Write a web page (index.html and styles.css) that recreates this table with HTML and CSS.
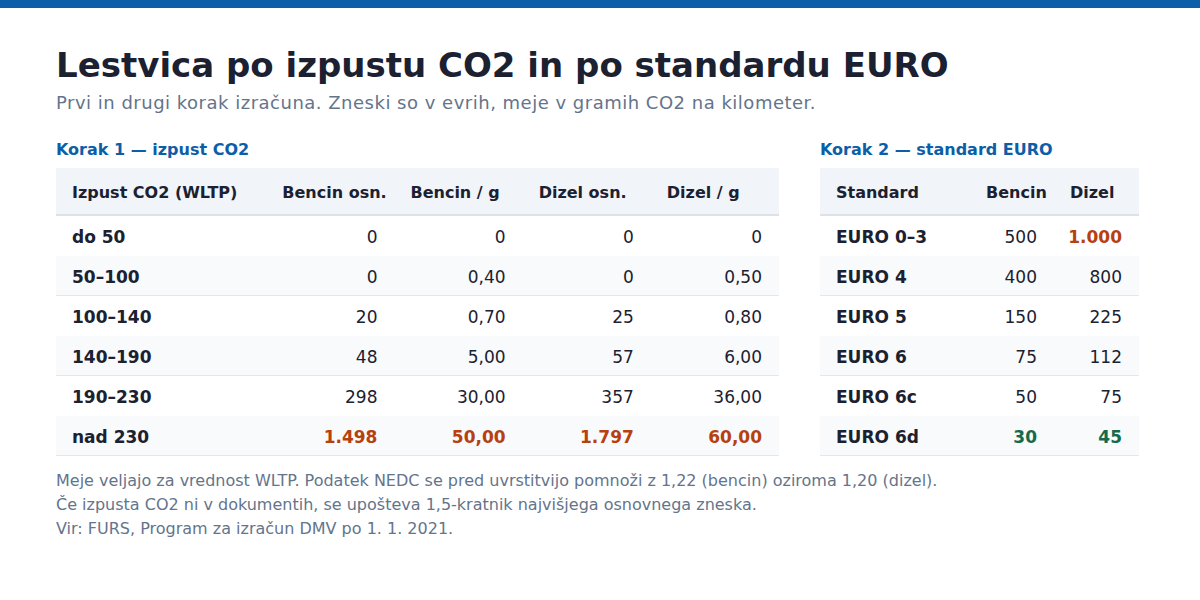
FILE: index.html
```html
<!DOCTYPE html>
<html lang="sl">
<head>
<meta charset="utf-8">
<title>Lestvica po izpustu CO2 in po standardu EURO</title>
<link rel="stylesheet" href="styles.css">
</head>
<body>
<div class="topbar"></div>
<main class="page">
  <h1 class="title">Lestvica po izpustu CO2 in po standardu EURO</h1>
  <p class="subtitle">Prvi in drugi korak izračuna. Zneski so v evrih, meje v gramih CO2 na kilometer.</p>
  <div class="tables">
    <section class="block block-co2">
      <h2 class="block-title">Korak 1 — izpust CO2</h2>
      <table class="grid grid-co2">
        <colgroup><col class="c-first"><col class="c-num"><col class="c-num"><col class="c-num"><col class="c-num"></colgroup>
        <thead>
          <tr><th>Izpust CO2 (WLTP)</th><th>Bencin osn.</th><th>Bencin / g</th><th>Dizel osn.</th><th>Dizel / g</th></tr>
        </thead>
        <tbody>
          <tr><td>do 50</td><td>0</td><td>0</td><td>0</td><td>0</td></tr>
          <tr><td>50–100</td><td>0</td><td>0,40</td><td>0</td><td>0,50</td></tr>
          <tr><td>100–140</td><td>20</td><td>0,70</td><td>25</td><td>0,80</td></tr>
          <tr><td>140–190</td><td>48</td><td>5,00</td><td>57</td><td>6,00</td></tr>
          <tr><td>190–230</td><td>298</td><td>30,00</td><td>357</td><td>36,00</td></tr>
          <tr><td>nad 230</td><td class="hi">1.498</td><td class="hi">50,00</td><td class="hi">1.797</td><td class="hi">60,00</td></tr>
        </tbody>
      </table>
    </section>
    <section class="block block-euro">
      <h2 class="block-title">Korak 2 — standard EURO</h2>
      <table class="grid grid-euro">
        <colgroup><col class="e-first"><col class="e-b"><col class="e-d"></colgroup>
        <thead>
          <tr><th>Standard</th><th>Bencin</th><th>Dizel</th></tr>
        </thead>
        <tbody>
          <tr><td>EURO 0–3</td><td>500</td><td class="hi">1.000</td></tr>
          <tr><td>EURO 4</td><td>400</td><td>800</td></tr>
          <tr><td>EURO 5</td><td>150</td><td>225</td></tr>
          <tr><td>EURO 6</td><td>75</td><td>112</td></tr>
          <tr><td>EURO 6c</td><td>50</td><td>75</td></tr>
          <tr><td>EURO 6d</td><td class="lo">30</td><td class="lo">45</td></tr>
        </tbody>
      </table>
    </section>
  </div>
  <div class="notes">
    <p>Meje veljajo za vrednost WLTP. Podatek NEDC se pred uvrstitvijo pomnoži z 1,22 (bencin) oziroma 1,20 (dizel).</p>
    <p>Če izpusta CO2 ni v dokumentih, se upošteva 1,5-kratnik najvišjega osnovnega zneska.</p>
    <p>Vir: FURS, Program za izračun DMV po 1. 1. 2021.</p>
  </div>
</main>
</body>
</html>
```

FILE: styles.css
```css
* { box-sizing: border-box; }
html, body { margin: 0; padding: 0; background: #ffffff; }
body {
  font-family: "DejaVu Sans", "Noto Sans", sans-serif;
  color: #1b2130;
}
.topbar { height: 8px; background: #0d5ea8; }
.page { padding: 37px 56px 0 56px; }
.title {
  margin: 0;
  font-size: 34px;
  font-weight: 700;
  color: #1b2130;
  line-height: 40px;
}
.subtitle {
  margin: 7px 0 0 0;
  font-size: 18px;
  letter-spacing: 0.5px;
  line-height: 22px;
  color: #64748b;
}
.tables {
  display: flex;
  gap: 41px;
  margin-top: 26px;
  align-items: flex-start;
}
.block-title {
  margin: 0 0 9px 0;
  font-size: 16px;
  line-height: 19px;
  font-weight: 700;
  color: #0d5ea8;
}
.grid {
  border-collapse: collapse;
  table-layout: fixed;
}
.grid-co2 { width: 723px; }
.grid-euro { width: 319px; }
.c-first { width: 210px; }
.c-num { width: 128px; }
.e-first { width: 150px; }
.e-b { width: 84px; }
.e-d { width: 85px; }
.grid thead tr { background: #f1f4f8; border-bottom: 2px solid #dde2e9; }
.grid th {
  text-align: left;
  font-size: 16px;
  font-weight: 700;
  padding: 15px 0 11px 16px;
  line-height: 20px;
  white-space: nowrap;
  color: #1b2130;
}
.grid td {
  font-size: 17px;
  padding: 11px 17px 9px 0;
  line-height: 20px;
  text-align: right;
  color: #1b2130;
  white-space: nowrap;
}
.grid td:first-child { text-align: left; font-weight: 700; padding-left: 16px; }
.grid tbody tr:nth-child(even) { background: #f8fafc; border-bottom: 1px solid #e2e8f0; }
.grid tbody tr:nth-child(even) td { padding-bottom: 8px; }
.grid td.hi { color: #b7410e; font-weight: 700; }
.grid td.lo { color: #136b4c; font-weight: 700; }
.notes { margin-top: 13px; }
.notes p {
  margin: 0;
  font-size: 16px;
  line-height: 24px;
  color: #64748b;
}
```
